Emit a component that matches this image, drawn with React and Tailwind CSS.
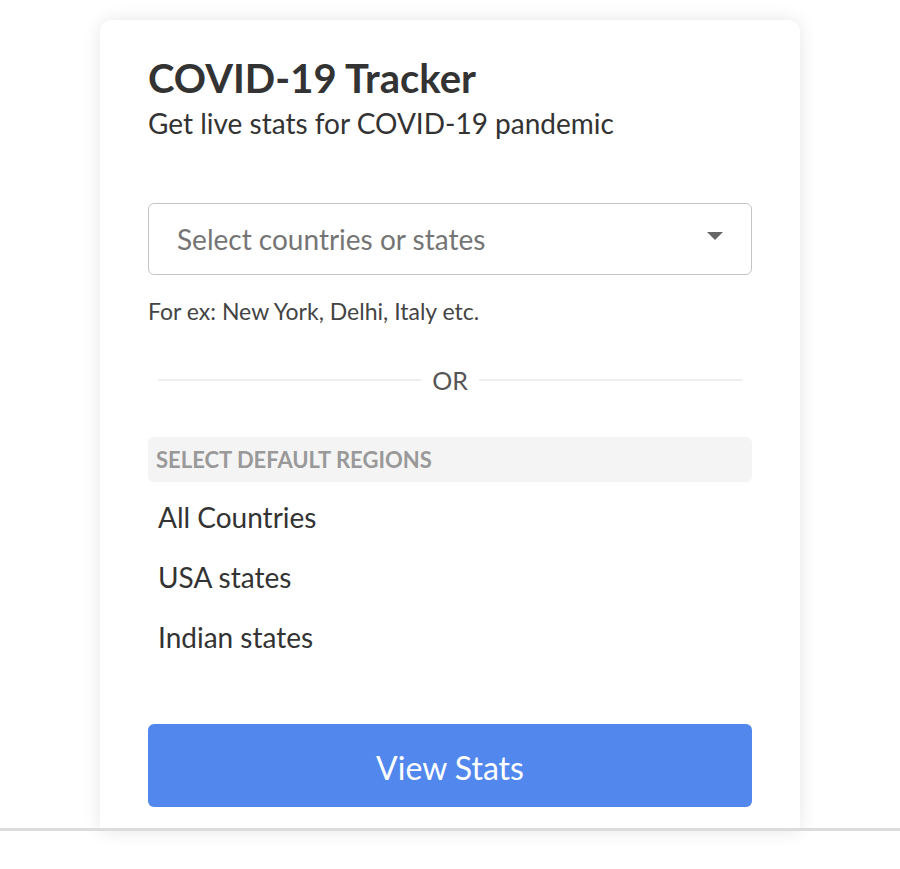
import { useState } from 'react'

const regions = ['All Countries', 'USA states', 'Indian states']

const App = () => {
  const [selected, setSelected] = useState(null)

  return (
    <div className="min-h-[869px] bg-white font-['Lato','Noto_Sans',sans-serif] text-[#333]">
      <div className="mx-auto mt-5 w-[700px] h-[811px] rounded-t-xl bg-white shadow-[0_0_18px_rgba(0,0,0,0.1)] px-12 pt-[34px]">
        <h1 className="text-[40px] font-bold leading-[48px] text-[#333]">COVID-19 Tracker</h1>
        <p className="mt-[4px] text-[28px] leading-[34px] text-[#333]">Get live stats for COVID-19 pandemic</p>

        <button
          type="button"
          className="mt-[63px] flex h-[72px] w-full items-center justify-between rounded-md border-[1.5px] border-[#c4c4c4] pl-7 pr-7 text-left"
        >
          <span className="text-[28px] leading-[34px] text-[#757575]">Select countries or states</span>
          <svg width="16" height="8" viewBox="0 0 16 8" className="mb-[6px]">
            <path d="M0 0h16L8 8z" fill="#666" />
          </svg>
        </button>
        <p className="mt-[22px] text-[23px] leading-[28px] text-[#444]">For ex: New York, Delhi, Italy etc.</p>

        <div className="mt-[41px] flex h-[28px] items-center px-[10px]">
          <div className="h-[2px] flex-1 bg-[#eee]" />
          <span className="px-[11px] text-[25px] leading-[28px] text-[#555]">OR</span>
          <div className="h-[2px] flex-1 bg-[#eee]" />
        </div>

        <div className="mt-[43px] flex h-[45px] items-center rounded-md bg-[#f4f4f4] px-2">
          <span className="text-[22px] font-bold uppercase leading-[26px] text-[#999]">Select default regions</span>
        </div>

        <ul className="mt-[5px] px-[10px]">
          {regions.map((r) => (
            <li
              key={r}
              onClick={() => setSelected(r)}
              className={`flex h-[60px] cursor-pointer items-center text-[28px] text-[#333] ${selected === r ? 'font-bold' : ''}`}
            >
              {r}
            </li>
          ))}
        </ul>

        <button
          type="button"
          className="mt-[57px] flex h-[83px] w-full items-center justify-center rounded-md bg-[#5288ee] pt-[5px] text-[32px] text-white"
        >
          View Stats
        </button>
      </div>
      <div className="relative z-10 -mt-[3px] h-[3px] w-full bg-[#dcdcdc]" />
    </div>
  )
}

export default App
